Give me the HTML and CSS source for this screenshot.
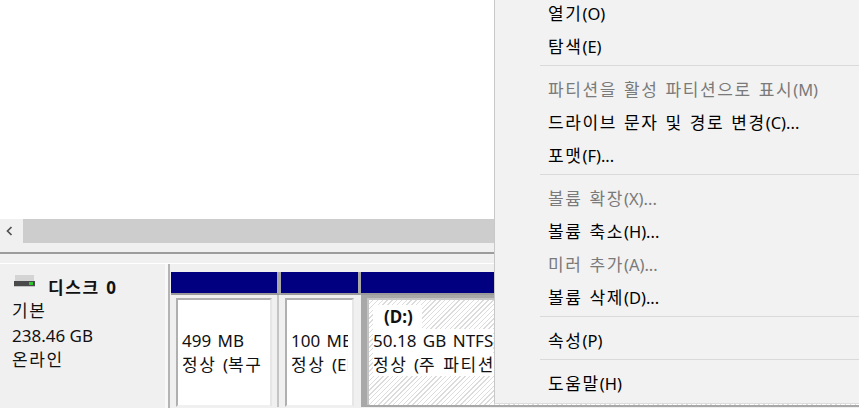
FILE: index.html
```html
<!DOCTYPE html>
<html lang="ko">
<head>
  <meta charset="UTF-8">
  <title>디스크 관리</title>
  <link rel="stylesheet" href="styles.css">
</head>
<body>

  <!-- volume list -->
  <div class="list-pane"></div>

  <div class="scrollbar">
    <div class="scroll-btn">
      <svg width="8" height="10" viewBox="0 0 8 10"><path d="M6.5 1 2.5 5l4 4" fill="none" stroke="#505050" stroke-width="1.7"/></svg>
    </div>
    <div class="scroll-track"></div>
  </div>

  <div class="splitter"></div>

  <!-- disk row -->
  <div class="disk-row">
    <div class="disk-info">
      <div class="disk-name">
        <svg class="disk-icon" width="21" height="12" viewBox="0 0 21 12">
          <rect x="1" y="0" width="19" height="6" fill="#d4d4d4"/>
          <rect x="0" y="6" width="21" height="5" fill="#4a4a4a"/>
          <rect x="15" y="7" width="4" height="3" fill="#2fc62f"/>
          <rect x="0" y="11" width="21" height="1" fill="#c4c4c4"/>
        </svg>
        <strong><span class="ko">디스크</span> 0</strong>
      </div>
      <p class="ko">기본</p>
      <p>238.46 GB</p>
      <p class="ko">온라인</p>
    </div>

    <div class="partitions">
      <div class="partition part-recovery">
        <div class="part-bar"></div>
        <div class="part-body">
          <div class="part-box">
            <p class="part-title"></p>
            <p>499 MB</p>
            <p><span class="ko">정상</span> (<span class="ko">복구</span></p>
          </div>
        </div>
      </div>
      <div class="partition part-efi">
        <div class="part-bar"></div>
        <div class="part-body">
          <div class="part-box">
            <p class="part-title"></p>
            <p>100 MB</p>
            <p><span class="ko">정상</span> (EFI</p>
          </div>
        </div>
      </div>
      <div class="partition part-data">
        <div class="part-bar"></div>
        <div class="part-body">
          <div class="part-box hatched">
            <p class="part-title"><strong>(D:)</strong></p>
            <p>50.18 GB NTFS</p>
            <p><span class="ko">정상</span> (<span class="ko">주 파티션</span></p>
          </div>
        </div>
      </div>
    </div>
  </div>

  <!-- context menu -->
  <ul class="menu">
    <li><span class="ko">열기</span>(O)</li>
    <li><span class="ko">탐색</span>(E)</li>
    <li class="sep"></li>
    <li class="off"><span class="ko">파티션을 활성 파티션으로 표시</span>(M)</li>
    <li><span class="ko">드라이브 문자 및 경로 변경</span>(C)...</li>
    <li><span class="ko">포맷</span>(F)...</li>
    <li class="sep"></li>
    <li class="off"><span class="ko">볼륨 확장</span>(X)...</li>
    <li><span class="ko">볼륨 축소</span>(H)...</li>
    <li class="off"><span class="ko">미러 추가</span>(A)...</li>
    <li><span class="ko">볼륨 삭제</span>(D)...</li>
    <li class="sep"></li>
    <li><span class="ko">속성</span>(P)</li>
    <li class="sep"></li>
    <li><span class="ko">도움말</span>(H)</li>
  </ul>

</body>
</html>
```

FILE: styles.css
```css
html, body {
  height: 408px;
  overflow: hidden;
}

body {
  margin: 0;
  position: relative;
  background-color: #f0f0f0;
  color: #111;
  font-family: "Noto Sans", "Noto Sans CJK KR", sans-serif;
  font-size: 17px;
}

p {
  margin: 0;
}

/* hangul runs wider than the latin text next to it */
.ko {
  font-size: 17px;
  letter-spacing: 1.6px;
  word-spacing: 1px;
}

.list-pane {
  height: 219px;
  background-color: #fff;
}

.scrollbar {
  display: flex;
  height: 24px;
  background-color: #f0f0f0;
}

.scroll-btn {
  width: 23px;
  padding-left: 5px;
  box-sizing: border-box;
  display: flex;
  align-items: center;
}

.scroll-track {
  flex: 1;
  background-color: #cdcdcd;
}

.splitter {
  height: 12px;
  margin-top: 9px;
  box-sizing: border-box;
  border-top: 2px solid #9c9c9c;
  border-bottom: 1px solid #fff;
}

.disk-row {
  display: flex;
  height: 144px;
  background-color: #f8f8f8;
}

.disk-info {
  width: 165px;
  padding: 13px 0 0 12px;
  box-sizing: border-box;
  line-height: 24.5px;
  background-color: #f0f0f0;
}

.disk-name {
  display: flex;
  align-items: center;
  height: 22px;
  word-spacing: 2px;
}

.disk-icon {
  margin: 0 13px 0 2px;
  position: relative;
  top: -7px;
}

.partitions {
  flex: 1;
  display: flex;
  margin-left: 3px;
  padding-left: 1px;
  padding-top: 8px;
  border-left: 2px solid #b4b4b4;
  background-color: #f0f0f0;
}

.partition {
  display: flex;
  flex-direction: column;
  flex-shrink: 0;
}

.part-recovery {
  width: 110px;
}

.part-efi {
  width: 80px;
}

.part-data {
  flex: 1;
}

.part-bar {
  height: 21px;
  background-color: #000080;
  border-bottom: 2px solid #9a9a9a;
  border-right: 3px solid #a8a8a8;
}

.part-recovery .part-bar {
  border-right-width: 4px;
}

.part-data .part-bar {
  border-right: none;
}

.part-body {
  height: 112px;
  box-sizing: border-box;
  padding-top: 3px;
}

.part-recovery .part-body {
  margin-right: 2px;
  padding: 3px 5px 0;
  border-right: 2px solid #c4c4c4;
}

.part-efi .part-body {
  padding: 3px 7px 0 4px;
}

.part-data .part-body {
  padding: 3px 0 0 6px;
  background-color: #a8a8a8;
}

.part-box {
  height: 109px;
  padding: 5px 4px 0;
  box-sizing: border-box;
  background-color: #fff;
  border: 2px solid #b0b0b0;
  border-right-color: #e6e6e6;
  border-bottom-color: #f0f0f0;
  white-space: nowrap;
  line-height: 23.5px;
  word-spacing: 2px;
}

.part-box p {
  overflow: hidden;
}

.part-title {
  height: 24px;
  padding-left: 11px;
}

.part-box.hatched {
  height: 107px;
  border-color: #c4c4c4;
  border-bottom: none;
  border-right: none;
  background-image: repeating-linear-gradient(135deg, #fff 0, #fff 2.4px, #dcdcdc 2.4px, #dcdcdc 3.4px);
}

.hatched p {
  width: fit-content;
  background-color: #fff;
}

.hatched .part-title {
  width: 38px;
}

.menu {
  position: absolute;
  left: 494px;
  top: -3px;
  width: 380px;
  height: 407px;
  margin: 0;
  padding: 0;
  list-style: none;
  box-sizing: border-box;
  background-color: #f2f2f2;
  border-left: 1px solid #c8c8c8;
  border-bottom: 1px solid #dcdcdc;
  color: #000;
  font-size: 16.5px;
}

.menu li {
  height: 33px;
  line-height: 33px;
  padding-left: 53px;
  white-space: nowrap;
}

.menu li.off {
  color: #7a7a7a;
}

.menu li.sep {
  height: 1px;
  margin: 2px 0 7px 45px;
  padding: 0;
  background-color: #dadada;
}
```
